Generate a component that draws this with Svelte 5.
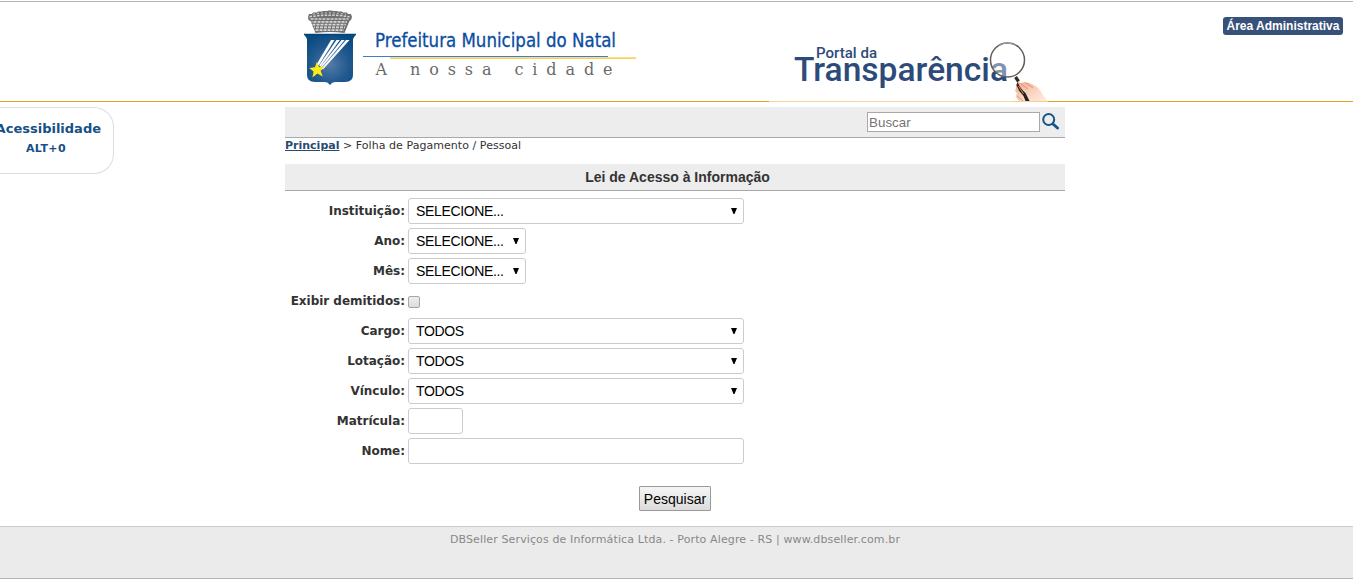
<script>
  const rows = [
    { id: 'instituicao', label: 'Instituição', kind: 'select', value: 'SELECIONE...', size: 'wide' },
    { id: 'ano', label: 'Ano', kind: 'select', value: 'SELECIONE...', size: 'medium' },
    { id: 'mes', label: 'Mês', kind: 'select', value: 'SELECIONE...', size: 'medium' },
    { id: 'demitidos', label: 'Exibir demitidos', kind: 'check' },
    { id: 'cargo', label: 'Cargo', kind: 'select', value: 'TODOS', size: 'wide' },
    { id: 'lotacao', label: 'Lotação', kind: 'select', value: 'TODOS', size: 'wide' },
    { id: 'vinculo', label: 'Vínculo', kind: 'select', value: 'TODOS', size: 'wide' },
    { id: 'matricula', label: 'Matrícula', kind: 'text', size: 'small' },
    { id: 'nome', label: 'Nome', kind: 'text', size: 'wide' }
  ];
  const bricks = [
    { y: 19, x1: 310.5, x2: 348.5, o: 0 },
    { y: 21.8, x1: 311.5, x2: 347, o: 2 },
    { y: 24.6, x1: 312.5, x2: 346, o: 0 },
    { y: 27.4, x1: 314, x2: 345, o: 2 },
    { y: 30.2, x1: 315.5, x2: 344, o: 0 }
  ];
</script>

<div class="page">
  <header>
    <svg class="banner" width="780" height="100" viewBox="285 2 780 100" aria-label="Prefeitura Municipal do Natal">
      <defs>
        <radialGradient id="shield" cx=".5" cy=".6" r=".65">
          <stop offset="0" stop-color="#537ba8" />
          <stop offset=".55" stop-color="#22598f" />
          <stop offset="1" stop-color="#064a80" />
        </radialGradient>
        <linearGradient id="skin" x1="0" y1="0" x2="1" y2="1">
          <stop offset="0" stop-color="#f0a98c" />
          <stop offset=".45" stop-color="#f8cfba" />
          <stop offset="1" stop-color="#fff0e6" />
        </linearGradient>
        <linearGradient id="fade">
          <stop offset="0" stop-color="#fff" stop-opacity=".55" />
          <stop offset=".85" stop-color="#fff" stop-opacity=".6" />
          <stop offset="1" stop-color="#fff" stop-opacity="0" />
        </linearGradient>
      </defs>

      <path d="M308 17l1-3 3 0 1-1.500 4 0 1-1 4 0 1-.6 4 0 1.500-.4h3l1.500.4 4 0 1 .6 4 0 1 1 4 0 1 1.500 3 0 1 3-1 3-1.500 1L344.500 33q-14.500-2-29 0L310.500 21l-2-1z" fill="#707070" />
      {#each bricks as b}
        <path d="M{b.x1} {b.y}H{b.x2}" stroke="#d6d6d6" stroke-width="1.700" stroke-dasharray="3 1" stroke-dashoffset={b.o} />
      {/each}
      <path d="M309.500 16.700q20-3 40 0" fill="none" stroke="#d2d2d2" stroke-width="1.500" stroke-dasharray="2.500 1.300" />
      <path d="M313 14.200q16-2.500 33 0" fill="none" stroke="#bbb" stroke-width="1.200" stroke-dasharray="2 2" />

      <path d="M304 34H356L353 39V75Q353 82 345 82H335Q332 82 330 85Q328 82 325 82H315Q307 82 307 75V39Z" fill="url(#shield)" />
      <path d="M304 34.5h52" stroke="#064477" stroke-width="1.5" />
      <g fill="#fff">
        <path d="M331 40h3.500L319 65l-2.500-.5z" />
        <path d="M336.500 40h3.300L320.500 66.500l-1.400-1z" />
        <path d="M341.500 40h3.200L321.500 68l-1.200-1z" />
        <path d="M346 40h3.500L323 69.500l-1.400-1z" />
      </g>
      <path d="M316.800 62l2.400 5.200 5.600-.4-4.200 4 2.200 5.600-5.400-3-5 4 1.200-5.900-4.300-3.600 5.700-.7z" fill="#ffeb13" />

      <text x="375" y="46.500" class="city" textLength="241" lengthAdjust="spacingAndGlyphs">Prefeitura Municipal do Natal</text>
      <path d="M390 58.200h246" stroke="#fbd05f" stroke-width="1.700" />
      <path d="M363 56.500h245" stroke="#3c7fc6" stroke-width="1.200" />
      <text x="375.500" y="75" class="motto" textLength="237">A nossa cidade</text>

      <text x="816" y="57.5" class="portal" textLength="61" lengthAdjust="spacingAndGlyphs">Portal da</text>
      <text x="794" y="81" class="transp" textLength="214" lengthAdjust="spacingAndGlyphs">Transparência</text>
      <circle cx="1007.5" cy="60" r="17" fill="#fff" fill-opacity=".4" stroke="#675c59" stroke-width="1.5" />
      <path d="M999 45.5q8-5 17 0" stroke="#aaa09c" fill="none" />
      <path d="M1016 86q0-3 3-4l2 1 4-1q7 1 13 6 3 3 5 7l5 6.500h-28q-4-2-4-6l1-2-2-3 1-2z" fill="url(#skin)" />
      <path d="M1021 84l7 5m-2-6l7 5m-15 2l4 3m-5 3l6 5" fill="none" stroke="#dc9474" stroke-width="1" />
      <path d="M1015.500 77l3 4.500" stroke="#332a28" stroke-width="3.200" />
      <path d="M1017.500 82q3 7 8 11l4 8h-4l-2-5q-5-5-7-11z" fill="#29201d" />
      <path d="M1018.500 86l5 8" stroke="#c38d50" />
    </svg>
    <a class="admin" href="#admin">Área Administrativa</a>
    <svg class="veil" width="280" height="1" viewBox="0 0 280 1" aria-hidden="true"><rect width="280" height="1" fill="url(#fade)" /></svg>
  </header>

  <aside>
    <b>Acessibilidade</b>
    <b class="key">ALT+0</b>
  </aside>

  <main>
    <div class="searchbar">
      <input type="text" placeholder="Buscar" aria-label="Buscar" />
      <svg width="18" height="18" viewBox="0 0 18 18"><circle cx="6.700" cy="7.500" r="5.500" fill="none" stroke="#17568b" stroke-width="2" /><path d="M11 12l4.500 4" stroke="#17568b" stroke-width="3" stroke-linecap="round" /></svg>
    </div>
    <nav><a href="#principal">Principal</a> &gt; Folha de Pagamento / Pessoal</nav>
    <h1>Lei de Acesso à Informação</h1>
    <form>
      {#each rows as r}
        <div class="row">
          <label for={r.id}>{r.label}:</label>
          {#if r.kind === 'select'}
            <div class="field {r.size}" id={r.id} role="combobox" aria-expanded="false" aria-controls={r.id} tabindex="0">
              <span>{r.value}</span>
              <svg width="6" height="7" viewBox="0 0 6 7"><path d="M0 0h6L3.500 6h-1z" /></svg>
            </div>
          {:else if r.kind === 'check'}
            <input class="check" type="checkbox" id={r.id} />
          {:else}
            <input class="field {r.size}" type="text" id={r.id} />
          {/if}
        </div>
      {/each}
      <button type="button">Pesquisar</button>
    </form>
  </main>

  <footer>DBSeller Serviços de Informática Ltda. - Porto Alegre - RS | www.dbseller.com.br</footer>
</div>

<style>
  :global(body) { margin: 0; background: #fff; overflow: hidden; }
  * { box-sizing: border-box; }
  .page {
    height: 579px;
    display: grid;
    grid-template-columns: 285px 780px 1fr;
    grid-template-rows: 102px 424px 53px;
    font-family: Verdana, "DejaVu Sans", sans-serif;
    color: #333;
  }
  header {
    grid-column: 1 / -1;
    display: grid;
    grid-template-columns: 285px 780px 1fr;
    grid-template-rows: 99px;
    margin-top: 1px;
    border-top: 1px solid #b3b3b3;
    border-bottom: 1px solid #e9a11b;
    position: relative;
  }
  .banner { grid-column: 2; display: block; height: 100px; width: 780px; overflow: visible; }
  .veil { position: absolute; left: 769px; bottom: -1px; }
  .city { font: 20px "DejaVu Sans Condensed", "DejaVu Sans", sans-serif; font-stretch: condensed; fill: #0b4da2; stroke: #0b4da2; stroke-width: .3px; }
  .motto { font: 16px "DejaVu Serif", serif; fill: #6a6a6a; }
  .portal { font: 500 14px Roboto, sans-serif; fill: #2d4b78; }
  .transp { font: 500 34px Roboto, sans-serif; fill: #2d4b78; }
  .admin {
    justify-self: end;
    margin: 15px 10px 0 0;
    width: 120px;
    height: 18px;
    border-radius: 3px;
    background: #375179;
    color: #fff;
    font: bold 12px/18px Arial, "Liberation Sans", sans-serif;
    text-align: center;
    text-decoration: none;
    white-space: nowrap;
  }
  aside {
    width: 114px;
    height: 67px;
    margin-top: 5px;
    padding: 13px 12px 0 0;
    border: 1px solid #ddd;
    border-left: 0;
    border-radius: 0 20px 20px 0;
    display: flex;
    flex-direction: column;
    align-items: flex-end;
    font-size: 13px;
    line-height: 16px;
    color: #164f86;
    overflow: hidden;
  }
  aside .key { font-size: 11px; letter-spacing: .4px; margin: 4px 35px 0 0; }
  main { padding-top: 5px; }
  .searchbar {
    height: 31px;
    display: flex;
    justify-content: flex-end;
    padding: 5px 5px 0 0;
    background: #ededed;
    border-bottom: 1px solid #a9a9a9;
  }
  .searchbar input {
    width: 173px;
    height: 20px;
    padding: 1px;
    margin-right: 2px;
    border: 1px solid #a9a9a9;
    font: 13.33px Arial, "Liberation Sans", sans-serif;
    letter-spacing: .05px;
  }
  .searchbar input::placeholder { color: #757575; }
  nav { height: 26px; padding-top: 1px; font-size: 11px; line-height: 14px; letter-spacing: .05px; white-space: nowrap; }
  nav a { color: #274b73; font-weight: bold; letter-spacing: 0; }
  h1 {
    height: 27px;
    margin: 0;
    padding-left: 5px;
    background: #ededed;
    border-bottom: 1px solid #a9a9a9;
    font: bold 14px/26px Arial, "Liberation Sans", sans-serif;
    text-align: center;
  }
  form { padding-top: 5px; }
  .row { height: 30px; display: grid; grid-template-columns: 120px 1fr; column-gap: 3px; align-items: center; }
  label { text-align: right; font-size: 12px; font-weight: bold; line-height: 20px; letter-spacing: -.03px; white-space: nowrap; }
  .field {
    height: 26px;
    border: 1px solid #ccc;
    border-radius: 3px;
    background: #fff;
    padding: 0 6px 0 7px;
    display: flex;
    align-items: center;
    justify-content: space-between;
    font: 14px Arial, "Liberation Sans", sans-serif;
    letter-spacing: -.35px;
    color: #000;
  }
  .wide { width: 336px; }
  .medium { width: 118px; }
  .small { width: 55px; }
  .check {
    appearance: none;
    width: 12px;
    height: 12px;
    margin: 2px 0 0;
    border: 1px solid #a6a6a6;
    border-radius: 2px;
    background: linear-gradient(#eee, #dcdcdc);
  }
  button {
    display: block;
    width: 72px;
    height: 25px;
    margin: 20px 0 0 354px;
    padding: 0;
    border: 1px solid #999;
    border-radius: 1px;
    background: linear-gradient(#f5f5f5, #dcdcdc);
    font: 14px Arial, "Liberation Sans", sans-serif;
    color: #000;
  }
  footer {
    grid-column: 1 / -1;
    background: #ebebeb;
    border-top: 1px solid #ccc;
    border-bottom: 1px solid #b3b3b3;
    padding-top: 6px;
    padding-right: 3px;
    font-size: 11px;
    letter-spacing: .12px;
    line-height: 14px;
    text-align: center;
    color: #888;
  }
</style>
